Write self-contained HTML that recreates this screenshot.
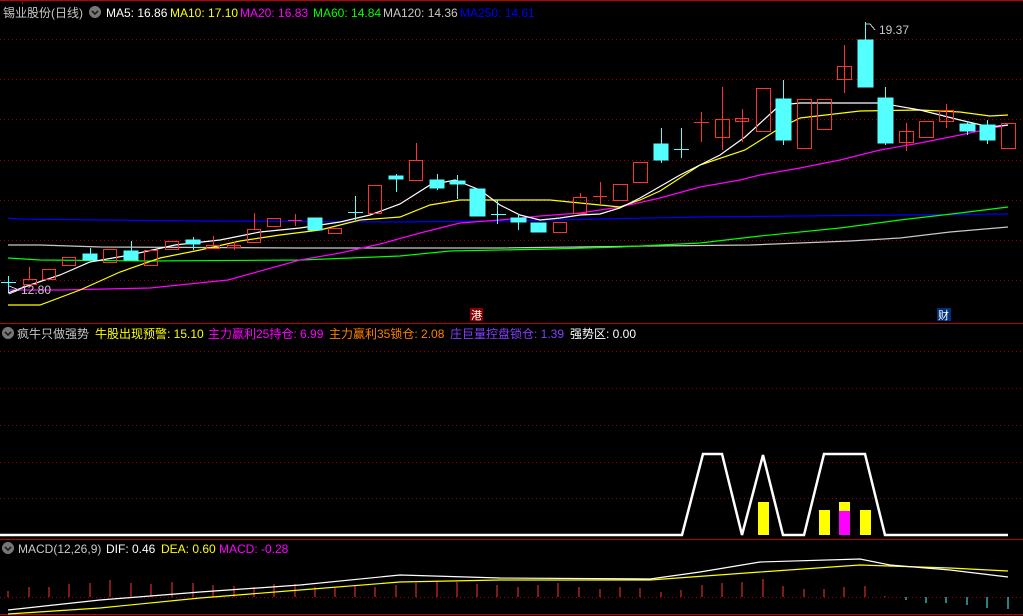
<!DOCTYPE html>
<html><head><meta charset="utf-8"><style>
html,body{margin:0;padding:0;background:#000;width:1023px;height:616px;overflow:hidden}
svg{display:block}
text{font-family:"Liberation Sans","Noto Sans CJK SC",sans-serif;font-size:12px}
</style></head><body>
<svg width="1023" height="616" xmlns="http://www.w3.org/2000/svg" shape-rendering="crispEdges">
<!-- frame -->
<line x1="0" y1="0.5" x2="1023" y2="0.5" stroke="#c00000"/>
<line x1="22.5" y1="0" x2="22.5" y2="4" stroke="#c00000"/>
<line x1="0" y1="323.5" x2="1023" y2="323.5" stroke="#c00000"/>
<line x1="0" y1="539.5" x2="1023" y2="539.5" stroke="#c00000"/>
<line x1="0" y1="614.5" x2="1023" y2="614.5" stroke="#c00000"/>
<g stroke="#a00000" stroke-dasharray="1,3">
<line x1="0" y1="39.5" x2="1023" y2="39.5"/><line x1="0" y1="79.5" x2="1023" y2="79.5"/>
<line x1="0" y1="119.5" x2="1023" y2="119.5"/><line x1="0" y1="160.5" x2="1023" y2="160.5"/>
<line x1="0" y1="200.5" x2="1023" y2="200.5"/><line x1="0" y1="240.5" x2="1023" y2="240.5"/>
<line x1="0" y1="280.5" x2="1023" y2="280.5"/>
<line x1="0" y1="351.5" x2="1023" y2="351.5"/><line x1="0" y1="388.5" x2="1023" y2="388.5"/>
<line x1="0" y1="425.5" x2="1023" y2="425.5"/><line x1="0" y1="462.5" x2="1023" y2="462.5"/>
<line x1="0" y1="498.5" x2="1023" y2="498.5"/>
<line x1="0" y1="597.5" x2="1023" y2="597.5"/>
</g>
<!-- header texts -->
<text x="3" y="17" fill="#c8c8c8">锡业股份(日线)</text>
<circle cx="95" cy="12" r="6" fill="#777"/><path d="M92 11 l3 3 l3 -3" stroke="#222" fill="none" stroke-width="1.5"/>
<text x="106" y="17" fill="#fff">MA5: 16.86</text>
<text x="170" y="17" fill="#ff0">MA10: 17.10</text>
<text x="240" y="17" fill="#f0f">MA20: 16.83</text>
<text x="313" y="17" fill="#0f0">MA60: 14.84</text>
<text x="383" y="17" fill="#c8c8c8">MA120: 14.36</text>
<text x="460" y="17" fill="#00f">MA250: 14.61</text>

<circle cx="8" cy="333" r="6" fill="#777"/><path d="M5 332 l3 3 l3 -3" stroke="#222" fill="none" stroke-width="1.5"/>
<text x="17" y="338" fill="#c8c8c8">疯牛只做强势</text>
<text x="95" y="338" fill="#ff0">牛股出现预警: 15.10</text>
<text x="208" y="338" fill="#f0f">主力赢利25持仓: 6.99</text>
<text x="329" y="338" fill="#ff8000">主力赢利35锁仓: 2.08</text>
<text x="450" y="338" fill="#8040ff">庄巨量控盘锁仓: 1.39</text>
<text x="570" y="338" fill="#fff">强势区: 0.00</text>

<circle cx="8" cy="548" r="6" fill="#777"/><path d="M5 547 l3 3 l3 -3" stroke="#222" fill="none" stroke-width="1.5"/>
<text x="18" y="553" fill="#c8c8c8">MACD(12,26,9)</text>
<text x="106" y="553" fill="#fff">DIF: 0.46</text>
<text x="161" y="553" fill="#ff0">DEA: 0.60</text>
<text x="219" y="553" fill="#f0f">MACD: -0.28</text>

<!-- MA lines -->
<g fill="none" stroke-width="1.2" shape-rendering="auto">
<polyline stroke="#00f" points="8,218 20,219 100,220 200,221 400,222 500,221 700,217 800,216 900,215 1008,214"/>
<polyline stroke="#c8c8c8" points="8,245 40,245 100,247 300,248 500,248 650,246 750,245 850,241 900,238 950,232 1008,227"/>
<polyline stroke="#0f0" points="8,258 40,260 150,261 300,260 400,256 450,251 550,249 620,247 700,243 760,236 840,228 900,220 960,213 1008,207"/>
<polyline stroke="#f0f" points="8,290 60,290 150,288 228,280 300,260 340,253 380,244 420,233 460,223 500,220 540,216 580,213 620,207 660,198 700,187 740,180 760,175 800,168 840,160 880,150 920,143 960,135 1008,125"/>
<polyline stroke="#ff0" points="8,305 40,305 80,290 120,272 160,258 200,250 240,241 280,235 320,230 360,220 400,217 430,205 460,200 550,200 590,204 620,207 640,200 660,191 700,165 745,150 780,128 800,118 860,111 920,110 960,112 990,116 1008,115"/>
<polyline stroke="#fff" points="8,293 30,285 60,275 90,262 130,255 175,245 220,240 260,232 300,228 340,222 370,215 400,204 430,185 455,180 480,190 500,205 520,215 540,220 560,218 580,215 600,214 620,208 640,198 680,175 720,155 745,137 780,105 800,103 880,103 920,110 960,120 990,127 1008,125"/>
</g>
<!-- candles -->
<g id="c">
<!-- red hollow: x,yTop,h, wick -->
<g stroke="#ff3232" fill="none">
<path d="M29.5 267V279M23.5 279.5h13v5h-13z"/>
<rect x="42.5" y="269.5" width="13" height="10"/>
<rect x="62.5" y="257.5" width="13" height="8"/>
<rect x="103.5" y="249.5" width="13" height="13"/>
<rect x="144.5" y="250.5" width="13" height="15"/>
<rect x="165.5" y="241.5" width="13" height="8"/>
<path d="M213.5 236V245"/><rect x="206.5" y="245.5" width="13" height="3"/>
<path d="M234.5 242V250"/><rect x="227.5" y="245.5" width="13" height="2"/>
<path d="M254.5 213V229"/><rect x="247.5" y="229.5" width="13" height="13"/>
<rect x="267.5" y="218.5" width="13" height="8"/>
<path d="M295.5 214V226M288 220.5h14"/>
<rect x="328.5" y="228.5" width="13" height="5"/>
<rect x="368.5" y="185.5" width="13" height="28"/>
<path d="M416.5 143V160"/><rect x="409.5" y="160.5" width="13" height="20"/>
<rect x="553.5" y="222.5" width="13" height="10"/>
<path d="M580.5 193V197"/><rect x="573.5" y="197.5" width="13" height="16"/>
<path d="M600.5 182V204M593 196.5h14"/>
<rect x="613.5" y="184.5" width="14" height="16"/>
<rect x="633.5" y="162.5" width="14" height="20"/>
<path d="M701.5 112V142M694 122.5h15"/>
<path d="M722.5 87V150"/><rect x="715.5" y="119.5" width="14" height="18"/>
<path d="M742.5 109V142"/><rect x="735.5" y="118.5" width="13" height="3"/>
<rect x="756.5" y="88.5" width="14" height="43"/>
<rect x="797.5" y="99.5" width="14" height="49"/>
<rect x="817.5" y="99.5" width="14" height="30"/>
<path d="M844.5 45V93"/><rect x="837.5" y="66.5" width="14" height="13"/>
<path d="M906.5 123V151"/><rect x="899.5" y="131.5" width="14" height="11"/>
<rect x="919.5" y="121.5" width="14" height="16"/>
<path d="M946.5 104V128"/><rect x="939.5" y="110.5" width="14" height="11"/>
<rect x="1001.5" y="123.5" width="14" height="25"/>
</g>
<g stroke="#54ffff" fill="#54ffff">
<path d="M8.5 276V292M1 282.5h15" fill="none"/>
<path d="M90.5 248V260" fill="none"/><rect x="83" y="254" width="14" height="6"/>
<path d="M131.5 241V260" fill="none"/><rect x="124" y="251" width="14" height="9"/>
<path d="M193.5 237V250" fill="none"/><rect x="186" y="240" width="14" height="4"/>
<rect x="308" y="218" width="14" height="12"/>
<path d="M355.5 196V220M348 212.5h15" fill="none"/>
<path d="M396.5 174V192" fill="none"/><rect x="389" y="176" width="14" height="3"/>
<path d="M437.5 174V190" fill="none"/><rect x="430" y="180" width="14" height="8"/>
<path d="M457.5 175V199" fill="none"/><rect x="450" y="181" width="15" height="3"/>
<rect x="470" y="189" width="15" height="27"/>
<path d="M497.5 200V224M491 214.5h15" fill="none"/>
<path d="M518.5 214V230" fill="none"/><rect x="511" y="218" width="15" height="4"/>
<rect x="531" y="223" width="15" height="9"/>
<path d="M661.5 128V163" fill="none"/><rect x="654" y="144" width="14" height="16"/>
<path d="M681.5 128V158M674 149.5h15" fill="none"/>
<path d="M783.5 80V145" fill="none"/><rect x="776" y="99" width="15" height="41"/>
<path d="M865.5 22V40" fill="none"/><rect x="858" y="40" width="15" height="47"/>
<path d="M885.5 87V145" fill="none"/><rect x="878" y="98" width="15" height="45"/>
<path d="M967.5 121V135" fill="none"/><rect x="960" y="124" width="15" height="7"/>
<path d="M987.5 120V144" fill="none"/><rect x="980" y="125" width="15" height="15"/>
</g>
</g>
<!-- price labels -->
<path d="M866 24 h4 l5 6" stroke="#c8c8c8" fill="none"/>
<text x="879" y="34" fill="#c8c8c8">19.37</text>
<path d="M9 286 l10 4 l-10 4" stroke="#c8c8c8" fill="none"/>
<text x="21" y="294" fill="#c8c8c8">12.80</text>
<rect x="470" y="308" width="13" height="13" fill="#8b0000"/>
<text x="471" y="319" fill="#fff" style="font-size:11px">港</text>
<rect x="937" y="308" width="14" height="13" fill="#00307a"/>
<text x="938" y="319" fill="#fff" style="font-size:11px">财</text>

<!-- middle panel -->
<rect x="758" y="502" width="11" height="33" fill="#ff0"/>
<rect x="819" y="510" width="11" height="25" fill="#ff0"/>
<rect x="839" y="502" width="11" height="9" fill="#ff0"/>
<rect x="839" y="511" width="11" height="24" fill="#f0f"/>
<rect x="860" y="510" width="11" height="25" fill="#ff0"/>
<polyline fill="none" stroke="#fff" stroke-width="2.5" shape-rendering="auto" points="0,535 682,535 703,454 722,454 742,535 763,455 783,535 804,535 824,454 865,454 885,535 1008,535"/>

<!-- MACD -->
<g stroke="#ff3232" stroke-width="1.3">
<path d="M8 597v-6M29 597v-10M49 597v-10M69 597v-13M90 597v-14M110 597v-17M131 597v-14M151 597v-13M172 597v-15M193 597v-14M213 597v-12M234 597v-11M254 597v-10M274 597v-13M295 597v-13M315 597v-10M335 597v-9M355 597v-11M375 597v-10M396 597v-12M416 597v-14M437 597v-16M457 597v-15M477 597v-13M497 597v-12M518 597v-10M538 597v-12M558 597v-14M579 597v-10M600 597v-8M620 597v-10M640 597v-9M661 597v-5M681 597v-7M702 597v-12M722 597v-14M742 597v-15M763 597v-18M783 597v-11M804 597v-8M824 597v-8M844 597v-10M865 597v-11M885 597v-1"/>
</g>
<g stroke="#54ffff" stroke-width="1.3">
<path d="M906 597v3M926 597v6M946 597v6M967 597v8M987 597v11M1008 597v12"/>
</g>
<g fill="none" stroke-width="1.2" shape-rendering="auto">
<polyline stroke="#ff0" points="8,614 100,608 200,598 300,590 400,582 500,580 650,580 760,572 860,565 950,568 1008,571"/>
<polyline stroke="#fff" points="8,610 100,600 200,592 300,585 400,575 500,578 650,579 700,572 760,562 860,559 890,565 950,570 1008,577"/>
</g>
</svg>
</body></html>
